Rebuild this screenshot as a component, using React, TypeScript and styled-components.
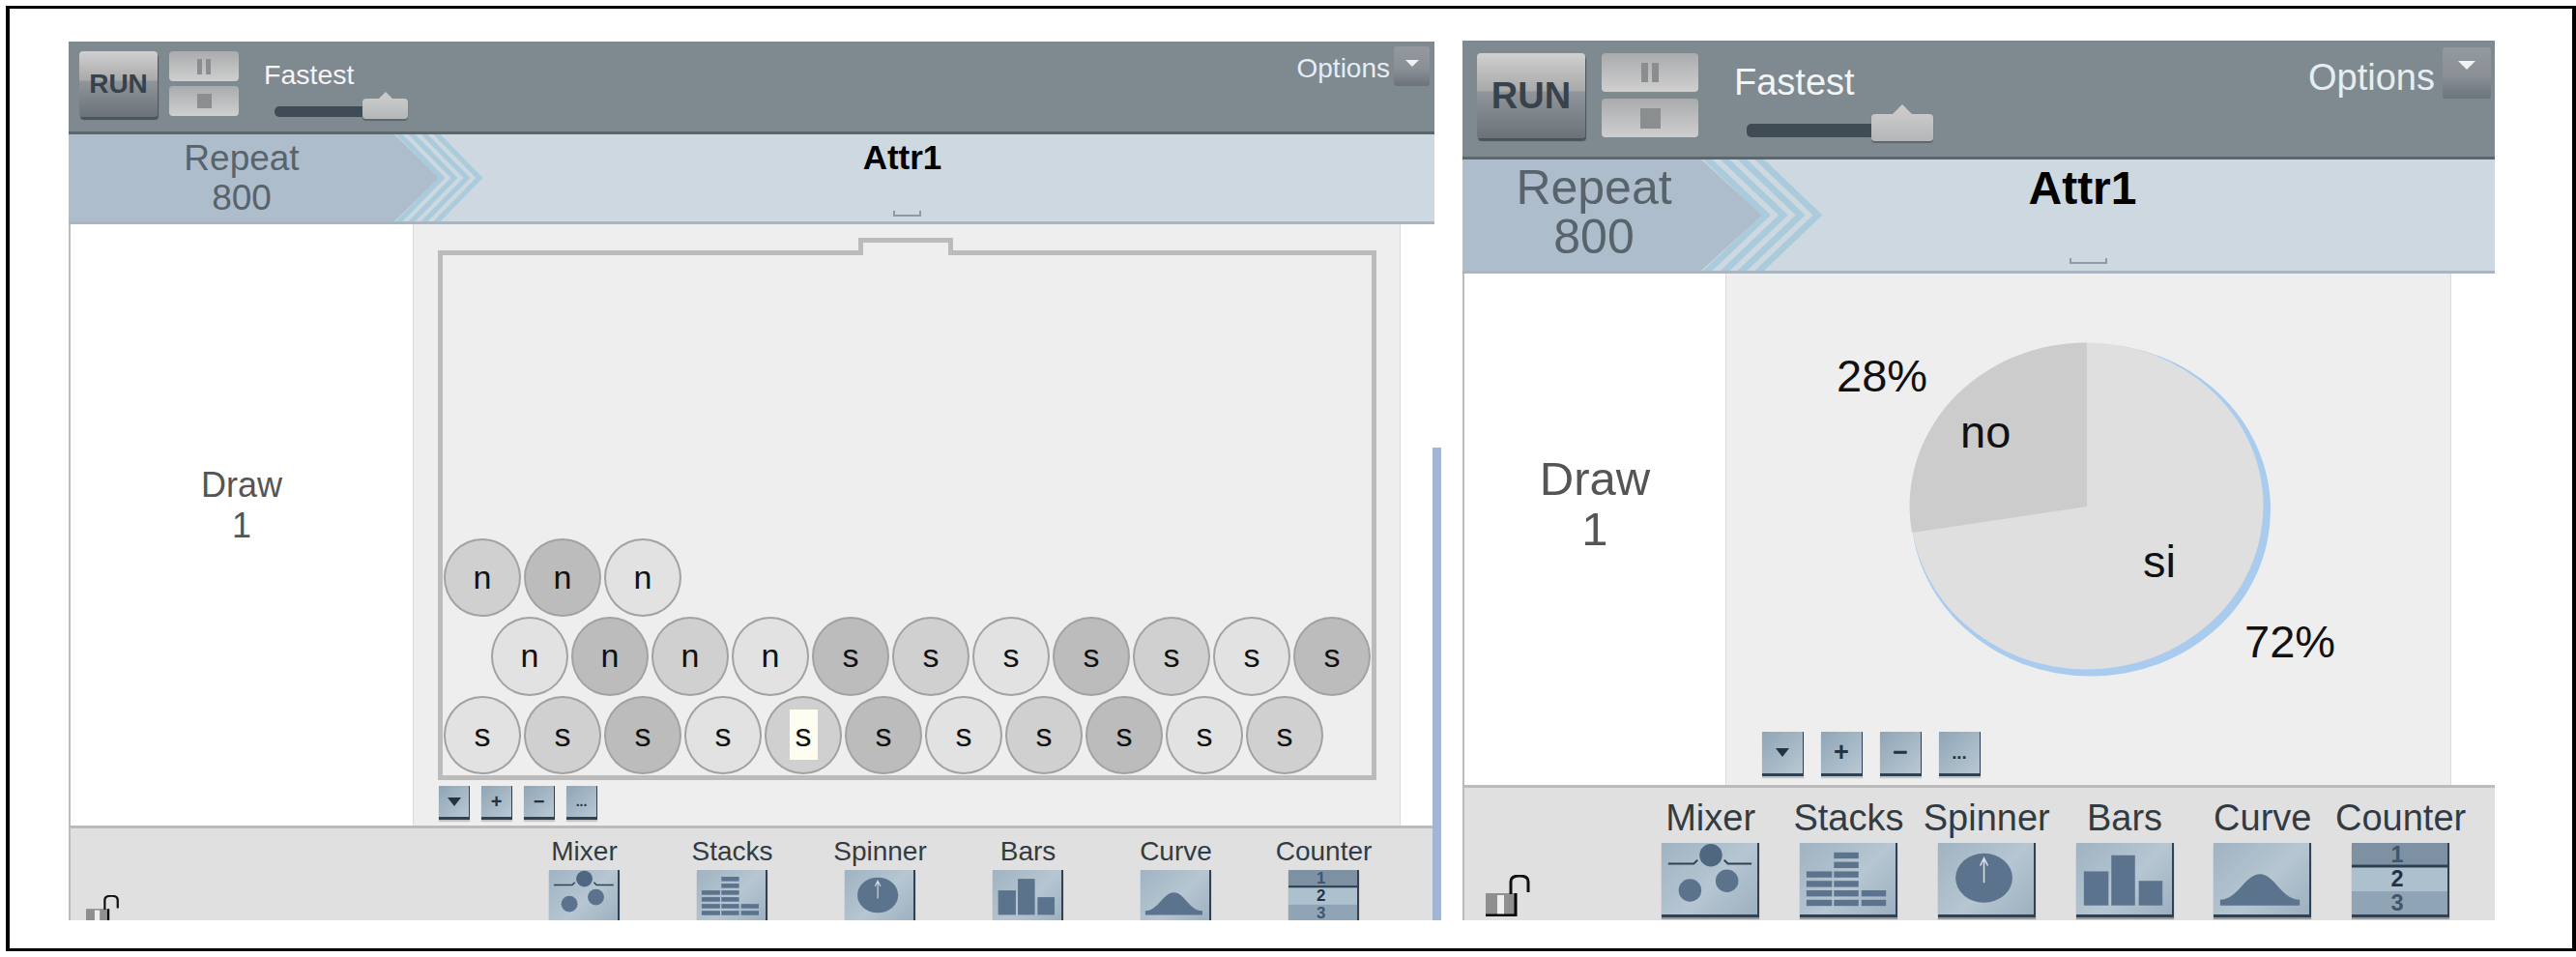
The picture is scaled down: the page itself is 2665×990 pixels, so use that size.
import styled, { createGlobalStyle, ThemeProvider } from 'styled-components';

const px = key => p => `${p.theme[key]}px`;

const SMALL = {
  width: 1413, top: 1, barH: 93, barPadTop: 10, barPadLeft: 11,
  runW: 81, runH: 68, runFont: 28, runGap: 12, ctlW: 72, ctlH: 31, ctlGap: 5, pauseBarW: 5, pauseBarH: 16, stopSize: 15,
  speedLeft: 26, speedTop: 9, speedFont: 28.5, speedLine: 30, slideTop: 3, slideLeft: 11, trackW: 138, trackH: 11, trackBottom: 2, thumbW: 47, thumbH: 21, thumbTip: 7,
  optFont: 28, optLine: 30, optTop: 3, optGap: 4, optBtnW: 37, optBtnH: 41, optBtnTop: -5, optRight: 5, optTri: 7,
  headH: 90, col: 356, shade: 337, repeatPad: 21, chevW: 92, repeatFont: 37, repeatLine: 41,
  titleFont: 35, titleLine: 40, titleTop: 4, titleShift: 9, handleW: 29, handleTop: 35,
  bodyH: 622, midW: 1022,
  btnW: 32, btnH: 35, btnGap: 12, btnFont: 20, btnLeft: 26, btnTop: 6,
  drawFont: 36, drawLine: 42, drawLift: 40,
  footPad: 9, tileW: 153, tileRight: 38, tileFont: 28, tileLine: 30, iconW: 73, iconTop: 4, lockW: 35, lockLeft: 16, lockTop: 69,
};

const LARGE = {
  width: 1068, top: 0, barH: 120, barPadTop: 13, barPadLeft: 15,
  runW: 112, runH: 88, runFont: 38, runGap: 17, ctlW: 100, ctlH: 40, ctlGap: 7, pauseBarW: 7, pauseBarH: 20, stopSize: 21,
  speedLeft: 37, speedTop: 10, speedFont: 38, speedLine: 40, slideTop: 3, slideLeft: 13, trackW: 193, trackH: 14, trackBottom: 4, thumbW: 64, thumbH: 28, thumbTip: 10,
  optFont: 38, optLine: 40, optTop: 5, optGap: 8, optBtnW: 50, optBtnH: 53, optBtnTop: -6, optRight: 4, optTri: 9,
  headH: 115, col: 272, shade: 247, repeatPad: 25, chevW: 126, repeatFont: 50, repeatLine: 51,
  titleFont: 48, titleLine: 54, titleTop: 3, titleShift: 12, handleW: 39, handleTop: 45,
  bodyH: 529, midW: 751,
  btnW: 43, btnH: 46, btnGap: 18, btnFont: 27, btnLeft: 37, btnTop: 0,
  drawFont: 49, drawLine: 52, drawLift: 54,
  footPad: 11, tileW: 142.8, tileRight: 26, tileFont: 38, tileLine: 40, iconW: 101, iconTop: 6, lockW: 47, lockLeft: 22, lockTop: 90,
};

const GREYS = { l: '#e2e2e2', m: '#d0d0d0', d: '#bcbcbc' };

const BALL_ROWS = [
  { indent: false, balls: [['n', 'm'], ['n', 'd'], ['n', 'l']] },
  {
    indent: true,
    balls: [['n', 'l'], ['n', 'd'], ['n', 'm'], ['n', 'l'], ['s', 'd'], ['s', 'm'], ['s', 'l'], ['s', 'd'], ['s', 'm'], ['s', 'l'], ['s', 'd']],
  },
  {
    indent: false,
    balls: [['s', 'l'], ['s', 'm'], ['s', 'd'], ['s', 'l'], ['s', 'm', true], ['s', 'd'], ['s', 'l'], ['s', 'm'], ['s', 'd'], ['s', 'l'], ['s', 'm']],
  },
];

const INK = '#5b738d';

const MixerIcon = () => (
  <IconSvg viewBox="0 0 101 76">
    <path d="M7 22H34L38 18M66 18L70 22H95" fill="none" stroke="#2f4152" strokeWidth="2" />
    <circle cx="52" cy="13" r="12" fill="#4f6780" />
    <circle cx="30" cy="50" r="12" fill={INK} />
    <circle cx="69" cy="40" r="12" fill={INK} />
  </IconSvg>
);

const StacksIcon = () => {
  const columns = [
    { x: 7, w: 27, rows: 4 },
    { x: 36, w: 26, rows: 6 },
    { x: 65, w: 26, rows: 2 },
  ];
  return (
    <IconSvg viewBox="0 0 101 76">
      {columns.map(({ x, w, rows }) =>
        Array.from({ length: rows }).map((_, i) => (
          <rect key={`${x}-${i}`} x={x} y={60 - i * 10} width={w} height={6.5} fill={INK} />
        )),
      )}
    </IconSvg>
  );
};

const SpinnerIcon = () => (
  <IconSvg viewBox="0 0 101 76">
    <ellipse cx="48.5" cy="37" rx="30" ry="26" fill={INK} />
    <path d="M48.5 42V17M44.5 24L48.5 16L52.5 24" fill="none" stroke="#d5dee5" strokeWidth="1.6" />
  </IconSvg>
);

const BarsIcon = () => (
  <IconSvg viewBox="0 0 101 76">
    <rect x="8" y="30" width="26" height="36" fill={INK} />
    <rect x="37" y="13" width="25" height="53" fill={INK} />
    <rect x="66" y="40" width="25" height="26" fill={INK} />
  </IconSvg>
);

const CurveIcon = () => (
  <IconSvg viewBox="0 0 101 76">
    <path d="M7 66V60C26 60 33 33 49 33C65 33 71 60 91 60V66Z" fill={INK} />
  </IconSvg>
);

const CounterIcon = () => (
  <IconSvg viewBox="0 0 101 76">
    <rect width="101" height="24" fill="#7d91a2" />
    <rect y="26" width="101" height="25" fill="#adc0cd" />
    <rect y="51" width="101" height="25" fill="#8fa5b5" />
    <rect y="23" width="101" height="3" fill="#2c3e50" />
    <CounterDigit x="48" y="20" fill="#3f566d">1</CounterDigit>
    <CounterDigit x="48" y="46" fill="#1f3347">2</CounterDigit>
    <CounterDigit x="48" y="71" fill="#3f566d">3</CounterDigit>
  </IconSvg>
);

const TOOLS = [
  { name: 'Mixer', icon: MixerIcon },
  { name: 'Stacks', icon: StacksIcon },
  { name: 'Spinner', icon: SpinnerIcon },
  { name: 'Bars', icon: BarsIcon },
  { name: 'Curve', icon: CurveIcon },
  { name: 'Counter', icon: CounterIcon },
];

const Toolbar = () => (
  <Bar>
    <RunButton>RUN</RunButton>
    <ControlStack>
      <ControlButton>
        <PauseBar />
        <PauseBar />
      </ControlButton>
      <ControlButton>
        <StopSquare />
      </ControlButton>
    </ControlStack>
    <Speed>
      <SpeedLabel>Fastest</SpeedLabel>
      <Slider>
        <Track />
        <Thumb />
      </Slider>
    </Speed>
    <Options>
      <OptionsLabel>Options</OptionsLabel>
      <OptionsButton>
        <OptionsArrow />
      </OptionsButton>
    </Options>
  </Bar>
);

const Header = () => (
  <Head>
    <RepeatShade />
    <Chevrons viewBox="0 0 92 90" preserveAspectRatio="none">
      <path d="M0 0L46 45L0 90Z" fill="#adbdcc" />
      {[3, 16, 29, 42].map(x => (
        <path key={x} d={`M${x} -2L${x + 46} 45L${x} 92`} fill="none" stroke="#a9cbdc" strokeWidth="5" />
      ))}
    </Chevrons>
    <RepeatText>
      Repeat
      <br />
      800
    </RepeatText>
    <TitleCell>
      <Title>Attr1</Title>
      <Handle />
    </TitleCell>
  </Head>
);

const ZoomButtons = () => (
  <ZoomRow>
    <ZoomButton>
      <DownArrow />
    </ZoomButton>
    <ZoomButton>+</ZoomButton>
    <ZoomButton>−</ZoomButton>
    <ZoomButton $small>...</ZoomButton>
  </ZoomRow>
);

const BallsView = () => (
  <>
    <BallBox>
      <Notch />
      {BALL_ROWS.map(({ indent, balls }, r) => (
        <BallRow key={r} $indent={indent}>
          {balls.map(([letter, tone, active], i) => (
            <Ball key={i} $tone={tone}>
              {active ? <ActiveLetter>{letter}</ActiveLetter> : letter}
            </Ball>
          ))}
        </BallRow>
      ))}
    </BallBox>
    <ZoomButtons />
  </>
);

const PieView = () => (
  <>
    <PieSvg viewBox="0 0 749 474">
      <ellipse cx="377" cy="244.5" rx="186" ry="172" fill="#a9cbee" />
      <ellipse cx="373" cy="240.5" rx="182.5" ry="169" fill="#dfdfdf" />
      <path d="M373 241V71.5A182.5 169 0 0 0 192 268Z" fill="#cccccc" />
      <PieLabel x="114" y="122">28%</PieLabel>
      <PieLabel x="242" y="180">no</PieLabel>
      <PieLabel x="431" y="314">si</PieLabel>
      <PieLabel x="536" y="397">72%</PieLabel>
    </PieSvg>
    <ZoomButtons />
  </>
);

const Panel = ({ metrics, children }) => (
  <ThemeProvider theme={metrics}>
    <PanelWrap>
      <Toolbar />
      <Header />
      <Body>
        <DrawColumn>
          Draw
          <br />1
        </DrawColumn>
        <MidColumn>{children}</MidColumn>
        <EndColumn />
      </Body>
      <Footer>
        <Lock viewBox="0 0 47 43">
          <rect x="0" y="19" width="31" height="24" fill="#8f8f8f" />
          <rect x="12" y="21" width="7" height="20" fill="#eeeeee" />
          <path d="M31 19V42H0" fill="none" stroke="#000" strokeWidth="3" />
          <path d="M26 20V7Q26 1 35 1Q44 1 44 7V18" fill="none" stroke="#111" strokeWidth="3" />
        </Lock>
        <Tools>
          {TOOLS.map(({ name, icon: Icon }) => (
            <Tool key={name}>
              <ToolName>{name}</ToolName>
              <ToolIcon>
                <Icon />
              </ToolIcon>
            </Tool>
          ))}
        </Tools>
      </Footer>
    </PanelWrap>
  </ThemeProvider>
);

const App = () => (
  <>
    <GlobalStyle />
    <Frame>
      <Panel metrics={SMALL}>
        <BallsView />
      </Panel>
      <SideBar />
      <Panel metrics={LARGE}>
        <PieView />
      </Panel>
    </Frame>
  </>
);

const GlobalStyle = createGlobalStyle`
  html, body {
    margin: 0;
    background: #fff;
    font-family: "Liberation Sans", Arial, sans-serif;
  }
  * {
    box-sizing: border-box;
  }
`;
const Frame = styled.div`
  display: flex;
  width: 2659px;
  height: 978px;
  margin: 6px 0 0 6px;
  padding: 33px 0 29px 61px;
  border: solid #000;
  border-width: 3px 4px;
`;
const PanelWrap = styled.section`
  display: flex;
  flex-direction: column;
  flex: none;
  width: ${px('width')};
  margin-top: ${px('top')};
  overflow: hidden;
`;
const SideBar = styled.div`
  flex: none;
  align-self: flex-end;
  width: 9px;
  height: 489px;
  margin: 0 22px 0 -2px;
  background: #a3b5d4;
`;
const Bar = styled.div`
  display: flex;
  align-items: flex-start;
  flex: none;
  height: calc(${px('barH')} + 3px);
  padding: ${px('barPadTop')} 0 0 ${px('barPadLeft')};
  background: #7f8990;
  border-bottom: 3px solid #5c666d;
`;
const RunButton = styled.div`
  display: flex;
  align-items: center;
  justify-content: center;
  flex: none;
  width: ${px('runW')};
  height: ${px('runH')};
  margin-right: ${px('runGap')};
  border-radius: 4px;
  background: linear-gradient(#d0d0d0 0%, #a9a9a9 44%, #8f959a 46%, #6b7278 100%);
  box-shadow: 1px 3px 1px #4a5359;
  color: #38424a;
  font-size: ${px('runFont')};
  font-weight: 700;
`;
const ControlStack = styled.div`
  display: flex;
  flex-direction: column;
  flex: none;
  gap: ${px('ctlGap')};
  width: ${px('ctlW')};
`;
const ControlButton = styled.div`
  display: flex;
  align-items: center;
  justify-content: center;
  gap: 4px;
  height: ${px('ctlH')};
  border-radius: 4px;
  background: linear-gradient(#a9abad, #cfcfcf);
`;
const PauseBar = styled.span`
  width: ${px('pauseBarW')};
  height: ${px('pauseBarH')};
  background: #8b8e90;
`;
const StopSquare = styled.span`
  width: ${px('stopSize')};
  height: ${px('stopSize')};
  background: #8b8e90;
`;
const Speed = styled.div`
  margin: ${px('speedTop')} 0 0 ${px('speedLeft')};
`;
const SpeedLabel = styled.div`
  color: #f4f4f4;
  font-size: ${px('speedFont')};
  line-height: ${px('speedLine')};
`;
const Slider = styled.div`
  position: relative;
  width: ${px('trackW')};
  height: ${p => p.theme.thumbH + p.theme.thumbTip}px;
  margin: ${px('slideTop')} 0 0 ${px('slideLeft')};
`;
const Track = styled.div`
  position: absolute;
  left: 0;
  right: 0;
  bottom: ${px('trackBottom')};
  height: ${px('trackH')};
  border-radius: 5px;
  background: #3f4b55;
`;
const Thumb = styled.div`
  position: absolute;
  right: 0;
  bottom: 0;
  width: ${px('thumbW')};
  height: ${px('thumbH')};
  border-radius: 4px;
  background: linear-gradient(#c9c9c9, #b4b6b8);
  box-shadow: 0 2px 1px #5c666d;

  &::before {
    content: '';
    position: absolute;
    left: 50%;
    top: -${px('thumbTip')};
    margin-left: -${px('thumbTip')};
    border: solid transparent;
    border-width: 0 ${px('thumbTip')} ${px('thumbTip')};
    border-bottom-color: #c9c9c9;
  }
`;
const Options = styled.div`
  display: flex;
  align-items: flex-start;
  gap: ${px('optGap')};
  margin: 0 ${px('optRight')} 0 auto;
`;
const OptionsLabel = styled.div`
  margin-top: ${px('optTop')};
  color: #e6edf2;
  font-size: ${px('optFont')};
  line-height: ${px('optLine')};
`;
const OptionsButton = styled.div`
  display: flex;
  justify-content: center;
  width: ${px('optBtnW')};
  height: ${px('optBtnH')};
  margin-top: ${px('optBtnTop')};
  padding-top: 14px;
  border-radius: 3px;
  background: linear-gradient(#93999e, #8a9096 55%, #6b747b);
`;
const OptionsArrow = styled.span`
  width: 0;
  height: 0;
  border: solid transparent;
  border-width: ${px('optTri')} ${px('optTri')} 0;
  border-top-color: #f2f2f2;
`;
const Head = styled.div`
  position: relative;
  display: grid;
  grid-template-columns: ${px('shade')} ${p => p.theme.col - p.theme.shade + p.theme.midW}px;
  flex: none;
  height: calc(${px('headH')} + 3px);
  background: #cdd8e1;
  border-bottom: 3px solid #a9b6c1;
`;
const RepeatShade = styled.div`
  position: absolute;
  left: 0;
  top: 0;
  bottom: 0;
  width: ${px('shade')};
  background: #adbdcc;
`;
const Chevrons = styled.svg`
  position: absolute;
  left: ${px('shade')};
  top: 0;
  width: ${px('chevW')};
  height: 100%;
`;
const RepeatText = styled.div`
  position: relative;
  padding: 4px 0 0 ${px('repeatPad')};
  color: #58636b;
  font-size: ${px('repeatFont')};
  line-height: ${px('repeatLine')};
  text-align: center;
  white-space: nowrap;
`;
const TitleCell = styled.div`
  position: relative;
  display: flex;
  flex-direction: column;
  align-items: center;
  margin-left: ${p => p.theme.col - p.theme.shade}px;
  padding-top: ${px('titleTop')};
`;
const Title = styled.div`
  margin-right: ${px('titleShift')};
  color: #000;
  font-size: ${px('titleFont')};
  font-weight: 700;
  line-height: ${px('titleLine')};
`;
const Handle = styled.div`
  width: ${px('handleW')};
  height: 6px;
  margin-top: ${px('handleTop')};
  border: 2px solid #8b9aa7;
  border-top: none;
`;
const Body = styled.div`
  display: grid;
  grid-template-columns: ${px('col')} ${px('midW')} 1fr;
  flex: none;
  height: ${px('bodyH')};
`;
const DrawColumn = styled.div`
  display: flex;
  align-items: center;
  justify-content: center;
  padding-bottom: ${px('drawLift')};
  text-align: center;
  background: #fff;
  border-left: 2px solid #bbb;
  color: #555;
  font-size: ${px('drawFont')};
  line-height: ${px('drawLine')};
`;
const MidColumn = styled.div`
  background: #eeeeee;
  border: solid #dcdcdc;
  border-width: 0 1px;
`;
const EndColumn = styled.div`
  background: #fff;
`;
const BallBox = styled.div`
  position: relative;
  display: flex;
  flex-direction: column;
  justify-content: flex-end;
  width: 971px;
  height: 548px;
  margin: 27px 0 0 25px;
  padding: 0 0 1px 1px;
  border: 5px solid #bbbbbb;
`;
const Notch = styled.div`
  position: absolute;
  left: 430px;
  top: -18px;
  width: 98px;
  height: 18px;
  background: #eeeeee;
  border: solid #bbbbbb;
  border-width: 5px 5px 0;
  box-shadow: 0 5px 0 #eeeeee;
`;
const BallRow = styled.div`
  display: flex;
  gap: 3px;
  margin-left: ${p => (p.$indent ? '49px' : '0')};
`;
const Ball = styled.div`
  display: flex;
  align-items: center;
  justify-content: center;
  flex: none;
  width: 80px;
  height: 81.5px;
  border-radius: 50%;
  border: 2px solid #a2a2a2;
  background: ${p => GREYS[p.$tone]};
  color: #111;
  font-size: 34px;
`;
const ActiveLetter = styled.span`
  display: flex;
  align-items: center;
  justify-content: center;
  width: 29px;
  height: 52px;
  background: #fffdf2;
`;
const ZoomRow = styled.div`
  display: flex;
  gap: ${px('btnGap')};
  margin: ${px('btnTop')} 0 0 ${px('btnLeft')};
`;
const ZoomButton = styled.div`
  display: flex;
  align-items: center;
  justify-content: center;
  width: ${px('btnW')};
  height: ${px('btnH')};
  background: linear-gradient(135deg, #8fa5b6, #b9c8d3);
  border: solid #2f4152;
  border-width: 0 1px 3px 0;
  box-shadow: 0 2px 1px #c4c4c4;
  color: #26333f;
  font-size: ${p => (p.$small ? `${p.theme.btnFont * 0.7}px` : px('btnFont')(p))};
  font-weight: 700;
`;
const DownArrow = styled.span`
  width: 0;
  height: 0;
  border: solid transparent;
  border-width: 9px 7px 0;
  border-top-color: #26333f;
`;
const PieSvg = styled.svg`
  display: block;
  width: 749px;
  height: 474px;
`;
const PieLabel = styled.text`
  fill: #111;
  font-size: 47px;
`;
const Footer = styled.div`
  display: flex;
  flex: 1;
  min-height: 0;
  overflow: hidden;
  background: #e0e0e0;
  border-top: 3px solid #bbb;
  border-left: 2px solid #bbb;
`;
const Lock = styled.svg`
  flex: none;
  align-self: flex-start;
  width: ${px('lockW')};
  margin: ${px('lockTop')} 0 0 ${px('lockLeft')};
`;
const Tools = styled.div`
  display: flex;
  margin-left: auto;
  padding: ${px('footPad')} ${px('tileRight')} 0 0;
`;
const Tool = styled.div`
  display: flex;
  flex-direction: column;
  align-items: center;
  width: ${px('tileW')};
`;
const ToolName = styled.div`
  color: #333b42;
  font-size: ${px('tileFont')};
  line-height: ${px('tileLine')};
`;
const ToolIcon = styled.div`
  flex: none;
  width: ${px('iconW')};
  margin-top: ${px('iconTop')};
  background: linear-gradient(135deg, #a0b3c2, #b6c6d2 55%, #9db0bf);
  border: solid #2f4152;
  border-width: 0 2px 3px 0;
  box-shadow: 0 2px 1px #9a9a9a;
`;
const IconSvg = styled.svg`
  display: block;
  width: 100%;
`;
const CounterDigit = styled.text`
  font-size: 24px;
  font-weight: 700;
  text-anchor: middle;
`;

export default App;
